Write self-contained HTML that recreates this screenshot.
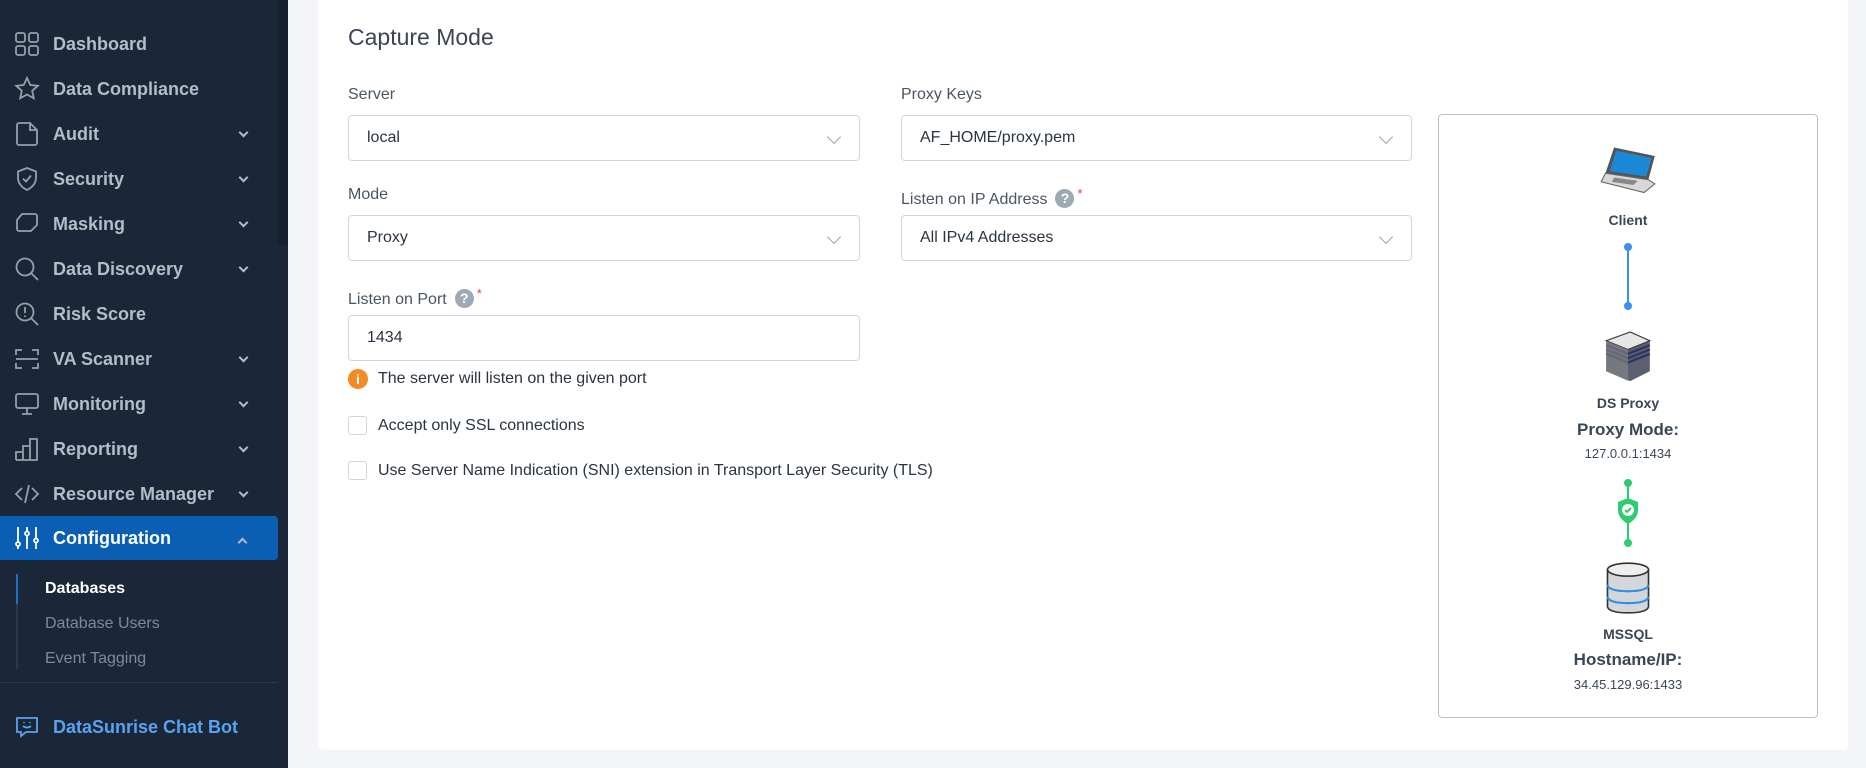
<!DOCTYPE html>
<html><head><meta charset="utf-8"><style>
*{box-sizing:border-box;margin:0;padding:0}
body{width:1866px;height:768px;overflow:hidden;background:#f3f5f8;font-family:"Liberation Sans",sans-serif;position:relative}
.sb{position:absolute;left:0;top:0;width:288px;height:768px;background:#1a2738}
.sb .scr{position:absolute;left:278px;top:0;width:10px;height:245px;background:#16212f}
.mi{position:absolute;left:0;width:278px;height:44px;color:#b3bcc7;font-size:18px;font-weight:bold;display:flex;align-items:center}
.mi svg{position:absolute;left:14px;width:26px;height:26px;fill:none;stroke:#95a0ad;stroke-width:1.8}
.mi span{position:absolute;left:53px}
.mi .ch{position:absolute;left:238px;width:10px;height:10px}
.mi .ch:after{content:"";position:absolute;left:2px;top:0;width:5px;height:5px;border-right:2px solid #b3bcc7;border-bottom:2px solid #b3bcc7;transform:rotate(45deg)}
.act{background:#0a5fb4;border-radius:0 4px 4px 0;color:#fff}
.act svg{stroke:#fff}
.sub{position:absolute;left:45px;font-size:16px;color:#7f8a97}
.card{position:absolute;left:318px;top:-10px;width:1530px;height:760px;background:#fff;border-radius:6px}
.t{position:absolute;font-size:16px;color:#4a5563}
.sel{position:absolute;height:46px;border:1px solid #cfd6de;border-radius:4px;background:#fff;font-size:16px;color:#2a3440;padding-left:18px;line-height:44px}
.sel .ar{position:absolute;right:20px;top:16px;width:10px;height:10px;border-right:1.6px solid #9aa4b0;border-bottom:1.6px solid #9aa4b0;transform:rotate(45deg)}
.q{display:inline-block;width:19px;height:19px;border-radius:50%;background:#9ea9b6;color:#fff;font-size:14px;font-weight:bold;text-align:center;line-height:19px;margin-left:8px;vertical-align:1px}
.req{color:#e53b3b;font-size:13px;vertical-align:6px;margin-left:3px}
.cb{position:absolute;width:19px;height:19px;border:1px solid #cfd6de;border-radius:3px;background:#fff}
.dg{position:absolute;left:1438px;top:114px;width:380px;height:604px;border:1px solid #b9c2cc;border-radius:4px;background:#fff}
.c{position:absolute;left:0;width:378px;text-align:center;color:#3a4656}
</style></head><body>
<div class="sb"><div class="scr"></div>
<div class="mi" style="top:22px"><svg viewBox="0 0 26 26"><rect x="2" y="2" width="9" height="9" rx="2"/><rect x="15" y="2" width="9" height="9" rx="2"/><rect x="2" y="15" width="9" height="9" rx="2"/><rect x="15" y="15" width="9" height="9" rx="2"/></svg><span>Dashboard</span></div>
<div class="mi" style="top:67px"><svg viewBox="0 0 26 26"><path d="M13 2l3.3 7 7.5.8-5.6 5 1.6 7.5L13 18.5l-6.8 3.8 1.6-7.5-5.6-5 7.5-.8z"/></svg><span>Data Compliance</span></div>
<div class="mi" style="top:112px"><svg viewBox="0 0 26 26"><path d="M3 4a2 2 0 0 1 2-2h11l7 7v13a2 2 0 0 1-2 2H5a2 2 0 0 1-2-2z M16 2v7h7"/></svg><span>Audit</span><i class="ch"></i></div>
<div class="mi" style="top:157px"><svg viewBox="0 0 26 26"><path d="M13 2l9 3.5v6c0 6-4 10-9 12.5C8 21.5 4 17.5 4 11.5v-6z M9 12.5l3 3 5-6"/></svg><span>Security</span><i class="ch"></i></div>
<div class="mi" style="top:202px"><svg viewBox="0 0 26 26"><path d="M8 3h13a2 2 0 0 1 2 2v9l-6 6H5a2 2 0 0 1-2-2V9z"/></svg><span>Masking</span><i class="ch"></i></div>
<div class="mi" style="top:247px"><svg viewBox="0 0 26 26"><circle cx="11" cy="11" r="8.5"/><path d="M17 17l7 7"/></svg><span>Data Discovery</span><i class="ch"></i></div>
<div class="mi" style="top:292px"><svg viewBox="0 0 26 26"><circle cx="11" cy="11" r="8.5"/><path d="M17 17l7 7M11 6v6M11 14.5v1.5"/></svg><span>Risk Score</span></div>
<div class="mi" style="top:337px"><svg viewBox="0 0 26 26"><path d="M2 9V4h6M18 4h6v5M24 17v5h-6M8 22H2v-5M2 13h22"/></svg><span>VA Scanner</span><i class="ch"></i></div>
<div class="mi" style="top:382px"><svg viewBox="0 0 26 26"><rect x="2" y="3" width="22" height="14" rx="2"/><path d="M13 17v5M8 23h10"/></svg><span>Monitoring</span><i class="ch"></i></div>
<div class="mi" style="top:427px"><svg viewBox="0 0 26 26"><path d="M2 24V16h7v8M9 24V10h7v14M16 24V3h7v21zM2 24h21"/></svg><span>Reporting</span><i class="ch"></i></div>
<div class="mi" style="top:472px"><svg viewBox="0 0 26 26"><path d="M8 7l-6 6 6 6M18 7l6 6-6 6M15 4l-4 18"/></svg><span>Resource Manager</span><i class="ch"></i></div>
<div class="mi act" style="top:516px"><svg viewBox="0 0 26 26"><path d="M4 2v15M4 20v4M13 2v5M13 10v14M22 2v12M22 17v7"/><circle cx="4" cy="19" r="2"/><circle cx="13" cy="8.5" r="2"/><circle cx="22" cy="15.5" r="2"/></svg><span style="color:#fff">Configuration</span><i class="ch" style="top:20px;transform:rotate(180deg)"></i></div>
<div style="position:absolute;left:16px;top:574px;width:2px;height:95px;background:#2a3a4e"></div>
<div style="position:absolute;left:16px;top:574px;width:2px;height:30px;background:#1f6fc5"></div>
<div class="sub" style="top:580px;color:#fff;font-weight:bold">Databases</div>
<div class="sub" style="top:615px">Database Users</div>
<div class="sub" style="top:650px">Event Tagging</div>
<div style="position:absolute;left:0;top:682px;width:278px;height:1px;background:#2c3a4c"></div>
<div class="mi" style="top:705px;color:#5aa2f0"><svg viewBox="0 0 26 26" style="stroke:#5aa2f0"><path d="M3 4h20v14H12l-5 4v-4H3z M9 12c2 2 6 2 8 0 M10 8v1 M16 8v1"/></svg><span>DataSunrise Chat Bot</span></div>
</div>

<div class="card"></div>
<div class="t" style="left:348px;top:24px;font-size:23px;color:#3a4656">Capture Mode</div>
<div class="t" style="left:348px;top:86px">Server</div>
<div class="sel" style="left:348px;top:115px;width:512px">local<i class="ar"></i></div>
<div class="t" style="left:901px;top:86px">Proxy Keys</div>
<div class="sel" style="left:901px;top:115px;width:511px">AF_HOME/proxy.pem<i class="ar"></i></div>
<div class="t" style="left:348px;top:186px">Mode</div>
<div class="sel" style="left:348px;top:215px;width:512px">Proxy<i class="ar"></i></div>
<div class="t" style="left:901px;top:186px">Listen on IP Address<span class="q">?</span><span class="req">*</span></div>
<div class="sel" style="left:901px;top:215px;width:511px">All IPv4 Addresses<i class="ar"></i></div>
<div class="t" style="left:348px;top:286px">Listen on Port<span class="q">?</span><span class="req">*</span></div>
<div class="sel" style="left:348px;top:315px;width:512px">1434</div>
<div style="position:absolute;left:348px;top:369px;width:20px;height:20px;border-radius:50%;background:#f48a24;color:#fff;font-weight:bold;font-size:14px;text-align:center;line-height:20px">i</div>
<div class="t" style="left:378px;top:370px;color:#2a3440">The server will listen on the given port</div>
<div class="cb" style="left:348px;top:416px"></div>
<div class="t" style="left:378px;top:417px;color:#2a3440">Accept only SSL connections</div>
<div class="cb" style="left:348px;top:461px"></div>
<div class="t" style="left:378px;top:462px;color:#2a3440">Use Server Name Indication (SNI) extension in Transport Layer Security (TLS)</div>

<div class="dg">
<svg style="position:absolute;left:160px;top:30px" width="58" height="50" viewBox="0 0 54 46"><path d="M14 2l38 8-6 22-40-6z" fill="#555" /><path d="M16 5l33 7-5 17-34-5z" fill="#1a8ad8"/><path d="M6 26l40 6 6 4-10 8L2 34z" fill="#d8d8d8" stroke="#666" stroke-width="1"/><path d="M14 30l22 3-4 4-20-3z" fill="#888"/></svg>
<div class="c" style="top:97px;font-size:14px;font-weight:bold">Client</div>
<div style="position:absolute;left:188px;top:131px;width:2px;height:60px;background:#3d8ef0"></div>
<div style="position:absolute;left:185px;top:128px;width:8px;height:8px;border-radius:50%;background:#3d8ef0"></div>
<div style="position:absolute;left:185px;top:187px;width:8px;height:8px;border-radius:50%;background:#3d8ef0"></div>
<svg style="position:absolute;left:165px;top:214px" width="48" height="54" viewBox="0 0 44 48"><path d="M2 10L24 2l18 8v28l-18 9L2 38z" fill="#5b5f70"/><path d="M2 10L24 2l18 8-20 8z" fill="#e6e6e6" stroke="#333"/><path d="M2 14l20 8 20-8M2 18l20 8 20-8M2 22l20 8 20-8" stroke="#2b3560" stroke-width="2" fill="none"/><path d="M2 10v28l20 9V18z" fill="#888" opacity=".6"/></svg>
<div class="c" style="top:280px;font-size:14px;font-weight:bold">DS Proxy</div>
<div class="c" style="top:305px;font-size:17px;font-weight:bold">Proxy Mode:</div>
<div class="c" style="top:331px;font-size:13px">127.0.0.1:1434</div>
<div style="position:absolute;left:188px;top:368px;width:2px;height:60px;background:#2ecc71"></div>
<div style="position:absolute;left:185px;top:364px;width:8px;height:8px;border-radius:50%;background:#2ecc71"></div>
<div style="position:absolute;left:185px;top:424px;width:8px;height:8px;border-radius:50%;background:#2ecc71"></div>
<svg style="position:absolute;left:177px;top:382px" width="24" height="28" viewBox="0 0 24 28"><path d="M12 1l10 4v8c0 7-5 11-10 14C7 24 2 20 2 13V5z" fill="#2ecc71"/><circle cx="12" cy="13" r="6" fill="#fff"/><path d="M9 13l2 2 4-4" stroke="#2ecc71" stroke-width="2" fill="none"/></svg>
<svg style="position:absolute;left:166px;top:446px" width="46" height="54" viewBox="0 0 42 50"><path d="M2 8v34c0 4 8 6 19 6s19-2 19-6V8z" fill="#d4d6da" stroke="#333" stroke-width="1.5"/><ellipse cx="21" cy="8" rx="19" ry="6" fill="#eeeeee" stroke="#333" stroke-width="1.5"/><path d="M2 22c0 4 8 6 19 6s19-2 19-6M2 33c0 4 8 6 19 6s19-2 19-6" stroke="#2f8fe8" stroke-width="2" fill="none"/></svg>
<div class="c" style="top:511px;font-size:14px;font-weight:bold">MSSQL</div>
<div class="c" style="top:535px;font-size:17px;font-weight:bold">Hostname/IP:</div>
<div class="c" style="top:562px;font-size:13px">34.45.129.96:1433</div>
</div>
</body></html>
